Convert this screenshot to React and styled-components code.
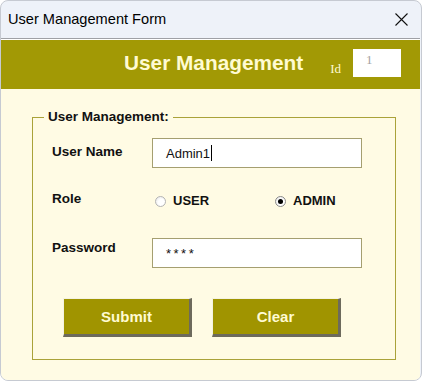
import React from 'react';
import styled, { createGlobalStyle } from 'styled-components';

const GlobalStyle = createGlobalStyle`
    body {
        margin: 0;
        background: #ffffff;
        font-family: "Liberation Sans", Arial, sans-serif;
    }
`;

const olive = '#a29905';
const cream = '#fffbe4';
const creamText = '#fffbd2';

const Window = styled.div`
    width: 422px;
    height: 381px;
    box-sizing: border-box;
    border: 1px solid #c6cad2;
    border-radius: 8px;
    overflow: hidden;
    background: #eef2f9;
    display: flex;
    flex-direction: column;
`;

const TitleBar = styled.div`
    height: 37px;
    flex-shrink: 0;
    display: flex;
    align-items: center;
    justify-content: space-between;
    padding: 0 13px 0 7px;
`;

const TitleText = styled.span`
    font-size: 14.6px;
    color: #000;
    padding-bottom: 1px;
`;

const Client = styled.div`
    flex: 1;
    display: flex;
    flex-direction: column;
    border-top: 1px solid #9fa1a6;
    margin-right: 1px;
    background: ${cream};
`;

const Header = styled.div`
    height: 49px;
    flex-shrink: 0;
    border-top: 1px solid #ffffff;
    background: ${olive};
    display: flex;
    align-items: center;
    justify-content: flex-end;
    padding-right: 19px;
`;

const HeaderTitle = styled.h1`
    margin: 0 27px 4px 0;
    font-size: 20.8px;
    font-weight: bold;
    color: ${creamText};
`;

const IdLabel = styled.span`
    font-family: "Liberation Serif", "Times New Roman", serif;
    font-size: 13px;
    color: ${creamText};
    margin: 8px 12px 0 0;
`;

const IdBox = styled.div`
    width: 48px;
    height: 28px;
    box-sizing: border-box;
    background: #ffffff;
    padding: 3px 0 0 13px;
    font-family: "Liberation Serif", "Times New Roman", serif;
    font-size: 13px;
    color: #a3a3a3;
    margin-bottom: 3px;
`;

const Body = styled.div`
    flex: 1;
    display: flex;
    flex-direction: column;
    padding: 20px 29px 20px 31px;
`;

const GroupBox = styled.fieldset`
    flex: 1;
    width: 358px;
    box-sizing: border-box;
    margin: 0;
    border: 1px solid #aaa23a;
    padding: 13px 0 0 19px;
`;

const Legend = styled.legend`
    margin-left: -8px;
    padding: 0 4px;
    font-size: 13.5px;
    line-height: 16px;
    font-weight: bold;
    color: #111;
`;

const Row = styled.div`
    display: flex;
    align-items: center;
    height: 30px;
    margin-top: ${(p) => p.$gap || 0}px;
`;

const Label = styled.span`
    width: 100px;
    font-size: 13.5px;
    font-weight: bold;
    color: #111;
    padding-bottom: ${(p) => p.$lift || 0}px;
`;

const Field = styled.div`
    width: 210px;
    height: 30px;
    box-sizing: border-box;
    border: 1px solid #a59f70;
    background: #ffffff;
    padding-left: 13px;
    display: flex;
    align-items: center;
    font-size: 13px;
    color: #111;
    letter-spacing: ${(p) => (p.$masked ? '2.5px' : 'normal')};
`;

const Caret = styled.span`
    display: inline-block;
    width: 1px;
    height: 16px;
    margin-left: 1px;
    background: #000;
`;

const RadioGroup = styled.div`
    display: flex;
    margin-left: 3px;
`;

const RadioOption = styled.label`
    width: 120px;
    display: flex;
    align-items: center;
    gap: 7px;
    font-size: 13px;
    font-weight: bold;
    color: #111;
`;

const RadioCircle = styled.span`
    width: 11px;
    height: 11px;
    box-sizing: border-box;
    border-radius: 50%;
    border: 1px solid ${(p) => (p.$checked ? '#8a8a8a' : '#b4b4b4')};
    background: radial-gradient(circle at 60% 60%, #ffffff 40%, #e2e2e2 100%);
    display: flex;
    align-items: center;
    justify-content: center;
    margin-top: 2px;

    &::after {
        content: '';
        display: ${(p) => (p.$checked ? 'block' : 'none')};
        width: 5px;
        height: 5px;
        border-radius: 50%;
        background: #000;
    }
`;

const ButtonRow = styled.div`
    display: flex;
    gap: 20px;
    margin-top: 30px;
    padding-left: 11px;
`;

const Button = styled.button`
    width: 129px;
    height: 39px;
    box-sizing: border-box;
    background: #a09400;
    border-style: solid;
    border-width: 1px 3px 3px 1px;
    border-color: #f4f2e2 #6d6a5c #6d6a5c #f4f2e2;
    color: ${creamText};
    font-family: "Liberation Sans", Arial, sans-serif;
    font-size: 15px;
    font-weight: bold;
    padding: 0;
    cursor: pointer;
`;

const CloseIcon = () => (
    <svg width="13" height="13" viewBox="0 0 13 13">
        <path d="M0.5 0.5 L12.5 12.5 M12.5 0.5 L0.5 12.5" stroke="#111" strokeWidth="1.1" />
    </svg>
);

export default () => (
    <>
        <GlobalStyle />
        <Window>
            <TitleBar>
                <TitleText>User Management Form</TitleText>
                <CloseIcon />
            </TitleBar>
            <Client>
                <Header>
                    <HeaderTitle>User Management</HeaderTitle>
                    <IdLabel>Id</IdLabel>
                    <IdBox>1</IdBox>
                </Header>
                <Body>
                    <GroupBox>
                        <Legend>User Management:</Legend>
                        <Row>
                            <Label $lift={4}>User Name</Label>
                            <Field>
                                Admin1
                                <Caret />
                            </Field>
                        </Row>
                        <Row $gap={17}>
                            <Label $lift={3}>Role</Label>
                            <RadioGroup>
                                <RadioOption>
                                    <RadioCircle />
                                    USER
                                </RadioOption>
                                <RadioOption>
                                    <RadioCircle $checked />
                                    ADMIN
                                </RadioOption>
                            </RadioGroup>
                        </Row>
                        <Row $gap={23}>
                            <Label $lift={12}>Password</Label>
                            <Field $masked>****</Field>
                        </Row>
                        <ButtonRow>
                            <Button>Submit</Button>
                            <Button>Clear</Button>
                        </ButtonRow>
                    </GroupBox>
                </Body>
            </Client>
        </Window>
    </>
);
